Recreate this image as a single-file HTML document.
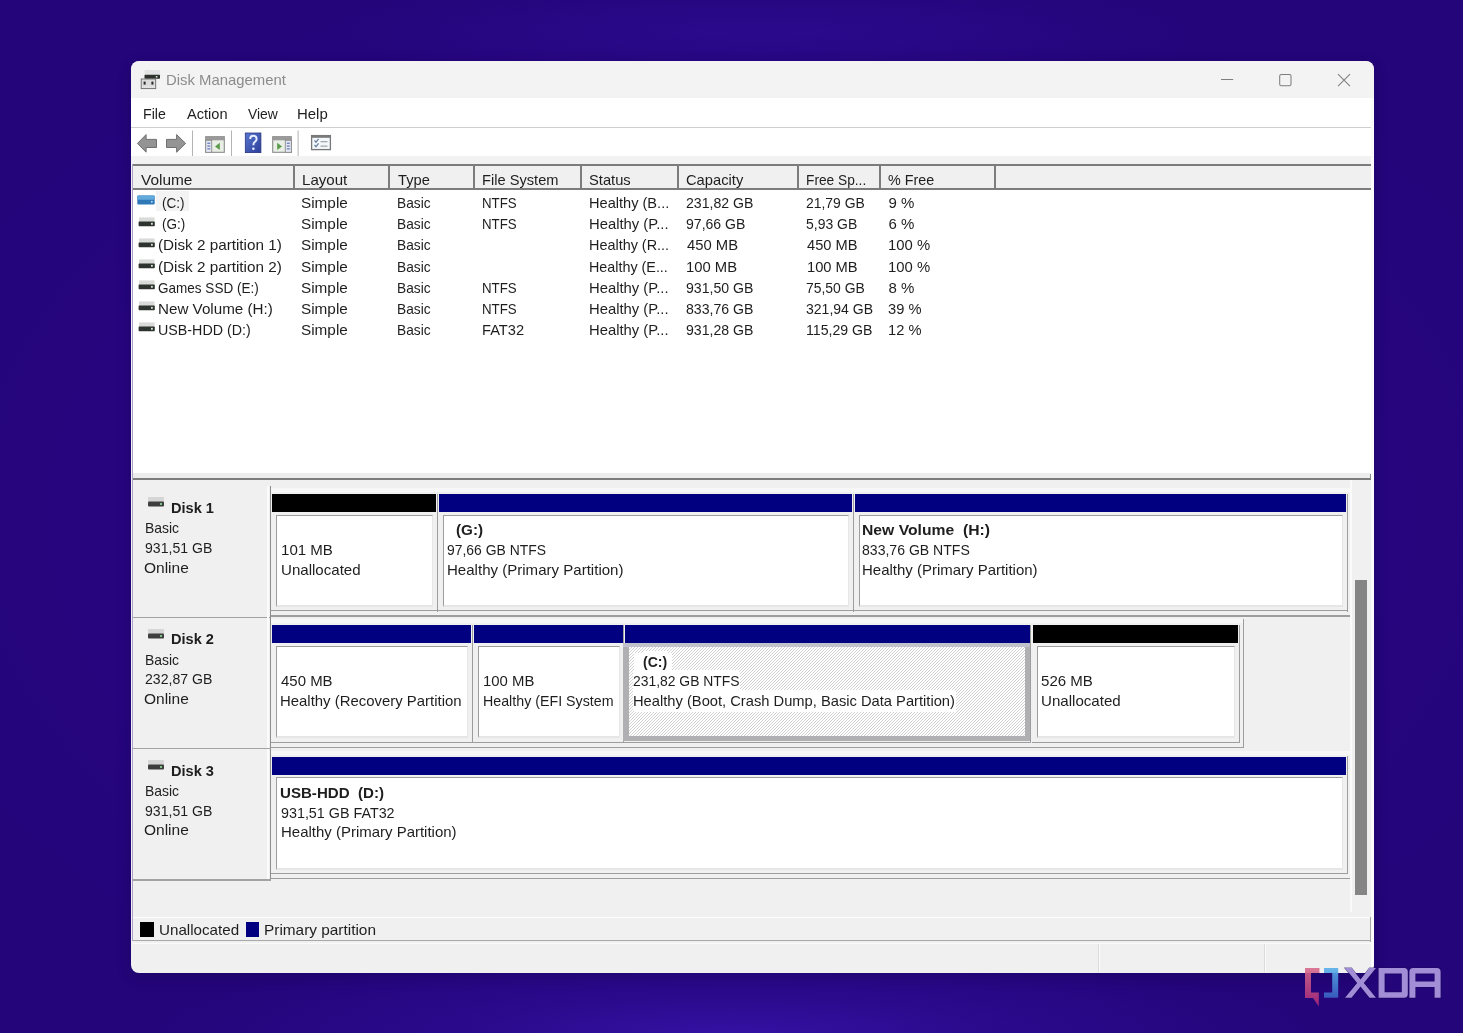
<!DOCTYPE html>
<html><head><meta charset="utf-8">
<style>
*{margin:0;padding:0;box-sizing:border-box}
html,body{width:1463px;height:1033px;overflow:hidden}
body{position:relative;font-family:"Liberation Sans",sans-serif;font-size:15px;color:#1e1e1e;
background:radial-gradient(ellipse 40% 8% at 50% 100%, rgba(56,20,172,.8) 0%, rgba(50,16,160,.45) 45%, rgba(38,5,127,0) 100%),radial-gradient(ellipse 30% 5% at 52% 3%, rgba(50,16,160,.45) 0%, rgba(38,5,127,0) 100%),radial-gradient(ellipse 60% 55% at 50% 50%, #2a0788 0%, #27057f 70%, #24057a 100%);}
.a{position:absolute}
.t{position:absolute;white-space:nowrap;filter:grayscale(1)}
.b{font-weight:bold}
</style></head><body>
<div class="a" style="left:131px;top:61px;width:1243px;height:911.6px;border-radius:8px;background:#f0f0f0;box-shadow:0 4px 14px rgba(10,0,50,.22)"></div>
<div class="a" style="left:0;top:0;width:1463px;height:1033px;clip-path:inset(61px 89px 60.4px 131px round 8px)">
<div class="a" style="left:131px;top:61px;width:1243px;height:37px;border-radius:8px 8px 0 0;background:#f3f3f3"></div>
<div class="t" style="left:165.61px;top:68.80px;line-height:21px;transform:scaleX(0.9917);transform-origin:0 0;color:#8c8c8c">Disk Management</div>
<div class="a" style="left:131px;top:98px;width:1243px;height:29px;background:#fff"></div>
<div class="a" style="left:131px;top:127px;width:1243px;height:1px;background:#cfcfcf"></div>
<div class="t" style="left:143.26px;top:102.80px;line-height:21px;transform:scaleX(0.9435);transform-origin:0 0;">File</div>
<div class="t" style="left:186.60px;top:102.80px;line-height:21px;transform:scaleX(0.9732);transform-origin:0 0;">Action</div>
<div class="t" style="left:248.00px;top:102.80px;line-height:21px;transform:scaleX(0.9250);transform-origin:0 0;">View</div>
<div class="t" style="left:296.90px;top:102.80px;line-height:21px;transform:scaleX(0.9966);transform-origin:0 0;">Help</div>
<div class="a" style="left:131px;top:128px;width:1243px;height:28px;background:#fff"></div>
<div class="a" style="left:131px;top:156px;width:1243px;height:8px;background:#f2f2f2"></div>
<svg class="a" style="left:140px;top:69px" width="22" height="21" viewBox="0 0 22 21">
<rect x="4.5" y="1" width="15.5" height="5" fill="#e2e4e4"/>
<rect x="4.5" y="5.8" width="15.5" height="4" rx="0.8" fill="#2d302d"/>
<rect x="15.8" y="7" width="1.6" height="1.6" fill="#cfe8cf"/>
<rect x="1.2" y="10" width="14.5" height="9.6" fill="#dcdcdc" stroke="#6a6a6a" stroke-width="0.9"/>
<rect x="3.6" y="12.6" width="2" height="3" fill="#2a2a2a"/>
<rect x="11.4" y="12.6" width="2" height="3" fill="#2a2a2a"/>
<line x1="2" y1="18" x2="15" y2="18" stroke="#fafafa" stroke-width="0.8" stroke-dasharray="1 1"/>
</svg>
<svg class="a" style="left:1215px;top:68px" width="145" height="24" viewBox="0 0 145 24">
<line x1="6" y1="11.4" x2="18.2" y2="11.4" stroke="#7e7e7e" stroke-width="1.05"/>
<rect x="64.7" y="6.5" width="11.3" height="11.3" rx="1.6" fill="none" stroke="#7e7e7e" stroke-width="1.05"/>
<path d="M123 6.2 L135 18.2 M135 6.2 L123 18.2" stroke="#7e7e7e" stroke-width="1.05"/>
</svg>
<svg class="a" style="left:0;top:0" width="400" height="160" viewBox="0 0 400 160">
<path d="M137.5,143.4 L146.1,134.6 L146.1,139.4 L156.5,139.4 L156.5,147.5 L146.1,147.5 L146.1,152.2 Z" fill="#949494" stroke="#707070" stroke-width="1"/>
<path d="M185.6,143.4 L176.6,134.6 L176.6,139.4 L166.5,139.4 L166.5,147.5 L176.6,147.5 L176.6,152.2 Z" fill="#949494" stroke="#707070" stroke-width="1"/>
<rect x="192" y="130.5" width="1" height="25.5" fill="#b4b4b4"/>
<rect x="231" y="130.5" width="1" height="25.5" fill="#b4b4b4"/>
<rect x="297.6" y="130.5" width="1" height="25.5" fill="#b4b4b4"/>
<g>
<rect x="205.7" y="136.7" width="18.6" height="15.6" fill="#e9efe6" stroke="#8a8a8a" stroke-width="1.1"/>
<rect x="205.7" y="136.7" width="18.6" height="3.6" fill="#9a9a9a"/>
<rect x="205.7" y="140.3" width="6" height="12" fill="#e6e9f2" stroke="#8a8a8a" stroke-width="0.9"/>
<rect x="207.3" y="142.6" width="3" height="1.3" fill="#6b7fbf"/><rect x="207.3" y="145.4" width="3" height="1.3" fill="#6b7fbf"/><rect x="207.3" y="148.2" width="3" height="1.3" fill="#6b7fbf"/>
<path d="M215,146.4 L219.8,142.8 L219.8,150 Z" fill="#5a9a4a"/>
</g>
<g>
<rect x="272.7" y="136.7" width="18.6" height="15.6" fill="#e9efe6" stroke="#8a8a8a" stroke-width="1.1"/>
<rect x="272.7" y="136.7" width="18.6" height="3.6" fill="#9a9a9a"/>
<rect x="285.3" y="140.3" width="6" height="12" fill="#e6e9f2" stroke="#8a8a8a" stroke-width="0.9"/>
<rect x="286.8" y="142.6" width="3" height="1.3" fill="#6b7fbf"/><rect x="286.8" y="145.4" width="3" height="1.3" fill="#6b7fbf"/><rect x="286.8" y="148.2" width="3" height="1.3" fill="#6b7fbf"/>
<path d="M282,146.4 L277.2,142.8 L277.2,150 Z" fill="#5a9a4a"/>
</g>
<defs><linearGradient id="hg" x1="0" y1="0" x2="1" y2="1"><stop offset="0" stop-color="#5a76cf"/><stop offset="1" stop-color="#2a3e9a"/></linearGradient></defs>
<rect x="245.3" y="133" width="15.6" height="19.6" fill="url(#hg)" stroke="#26367e" stroke-width="0.8"/>
<path d="M250.2,139 Q250.2,135.8 253.3,135.8 Q256.6,135.8 256.6,139 Q256.6,141 254.6,142.2 Q253.4,143 253.4,145.3" fill="none" stroke="#e4ecff" stroke-width="2"/>
<circle cx="253.4" cy="148.7" r="1.3" fill="#e4ecff"/>
<rect x="311.6" y="135.6" width="18.8" height="14" fill="#f2f8fc" stroke="#777" stroke-width="1.3"/>
<rect x="311.6" y="135.6" width="18.8" height="2.2" fill="#7a7a7a"/>
<path d="M314.5,140.5 L316,142.2 L318.6,138.9 M314.5,145 L316,146.7 L318.6,143.4" fill="none" stroke="#6a80a0" stroke-width="1.2"/>
<rect x="320.5" y="141" width="7" height="1.3" fill="#a8a8a8"/><rect x="320.5" y="145.5" width="7" height="1.3" fill="#a8a8a8"/>
</svg>
<div class="a" style="left:133px;top:164px;width:1238px;height:309px;background:#fff"></div>
<div class="a" style="left:133px;top:164px;width:1238px;height:26px;background:#f0f0f0"></div>
<div class="a" style="left:133px;top:164px;width:1238px;height:2px;background:#7c7c7c"></div>
<div class="a" style="left:133px;top:188px;width:1238px;height:2px;background:#7c7c7c"></div>
<div class="a" style="left:293px;top:164px;width:2px;height:26px;background:#7c7c7c"></div>
<div class="a" style="left:388px;top:164px;width:2px;height:26px;background:#7c7c7c"></div>
<div class="a" style="left:473px;top:164px;width:2px;height:26px;background:#7c7c7c"></div>
<div class="a" style="left:580px;top:164px;width:2px;height:26px;background:#7c7c7c"></div>
<div class="a" style="left:677px;top:164px;width:2px;height:26px;background:#7c7c7c"></div>
<div class="a" style="left:797px;top:164px;width:2px;height:26px;background:#7c7c7c"></div>
<div class="a" style="left:879px;top:164px;width:2px;height:26px;background:#7c7c7c"></div>
<div class="a" style="left:994px;top:164px;width:2px;height:26px;background:#7c7c7c"></div>
<div class="t" style="left:141.00px;top:169.30px;line-height:21px;transform:scaleX(1.0280);transform-origin:0 0;">Volume</div>
<div class="t" style="left:301.50px;top:169.30px;line-height:21px;transform:scaleX(1.0045);transform-origin:0 0;">Layout</div>
<div class="t" style="left:398.00px;top:169.30px;line-height:21px;transform:scaleX(0.9781);transform-origin:0 0;">Type</div>
<div class="t" style="left:482.22px;top:169.30px;line-height:21px;transform:scaleX(0.9763);transform-origin:0 0;">File System</div>
<div class="t" style="left:589.32px;top:169.30px;line-height:21px;transform:scaleX(0.9805);transform-origin:0 0;">Status</div>
<div class="t" style="left:685.52px;top:169.30px;line-height:21px;transform:scaleX(0.9807);transform-origin:0 0;">Capacity</div>
<div class="t" style="left:806.09px;top:169.30px;line-height:21px;transform:scaleX(0.9141);transform-origin:0 0;">Free Sp...</div>
<div class="t" style="left:888.44px;top:169.30px;line-height:21px;transform:scaleX(0.9553);transform-origin:0 0;">% Free</div>
<div class="a" style="left:156px;top:191px;width:32.5px;height:19.5px;background:#f3f3f3"></div>
<svg class="a" style="left:137.3px;top:195.2px" width="18" height="10" viewBox="0 0 18 10"><rect x="0.3" y="0.5" width="17.4" height="9" rx="1" fill="#2f78b8"/><rect x="0.3" y="0.5" width="17.4" height="4.2" rx="1" fill="#62a9dc"/><rect x="14" y="6" width="1.6" height="1.5" fill="#c8e4f4"/></svg>
<svg class="a" style="left:137.5px;top:216.6px" width="18" height="10" viewBox="0 0 18 10"><rect x="1" y="0.4" width="15.5" height="4.6" fill="#d9dbd9"/><rect x="0.6" y="4.6" width="16.2" height="4.6" rx="0.8" fill="#2e332f"/><rect x="13" y="5.9" width="1.8" height="1.8" fill="#d4ecd4"/></svg>
<svg class="a" style="left:137.5px;top:237.7px" width="18" height="10" viewBox="0 0 18 10"><rect x="1" y="0.4" width="15.5" height="4.6" fill="#d9dbd9"/><rect x="0.6" y="4.6" width="16.2" height="4.6" rx="0.8" fill="#2e332f"/><rect x="13" y="5.9" width="1.8" height="1.8" fill="#d4ecd4"/></svg>
<svg class="a" style="left:137.5px;top:258.8px" width="18" height="10" viewBox="0 0 18 10"><rect x="1" y="0.4" width="15.5" height="4.6" fill="#d9dbd9"/><rect x="0.6" y="4.6" width="16.2" height="4.6" rx="0.8" fill="#2e332f"/><rect x="13" y="5.9" width="1.8" height="1.8" fill="#d4ecd4"/></svg>
<svg class="a" style="left:137.5px;top:279.9px" width="18" height="10" viewBox="0 0 18 10"><rect x="1" y="0.4" width="15.5" height="4.6" fill="#d9dbd9"/><rect x="0.6" y="4.6" width="16.2" height="4.6" rx="0.8" fill="#2e332f"/><rect x="13" y="5.9" width="1.8" height="1.8" fill="#d4ecd4"/></svg>
<svg class="a" style="left:137.5px;top:301.0px" width="18" height="10" viewBox="0 0 18 10"><rect x="1" y="0.4" width="15.5" height="4.6" fill="#d9dbd9"/><rect x="0.6" y="4.6" width="16.2" height="4.6" rx="0.8" fill="#2e332f"/><rect x="13" y="5.9" width="1.8" height="1.8" fill="#d4ecd4"/></svg>
<svg class="a" style="left:137.5px;top:322.1px" width="18" height="10" viewBox="0 0 18 10"><rect x="1" y="0.4" width="15.5" height="4.6" fill="#d9dbd9"/><rect x="0.6" y="4.6" width="16.2" height="4.6" rx="0.8" fill="#2e332f"/><rect x="13" y="5.9" width="1.8" height="1.8" fill="#d4ecd4"/></svg>
<div class="t" style="left:162.30px;top:192.20px;line-height:21px;transform:scaleX(0.9043);transform-origin:0 0;">(C:)</div>
<div class="t" style="left:301.48px;top:192.20px;line-height:21px;transform:scaleX(1.0205);transform-origin:0 0;">Simple</div>
<div class="t" style="left:397.09px;top:192.20px;line-height:21px;transform:scaleX(0.9143);transform-origin:0 0;">Basic</div>
<div class="t" style="left:482.31px;top:192.20px;line-height:21px;transform:scaleX(0.8868);transform-origin:0 0;">NTFS</div>
<div class="t" style="left:589.33px;top:192.20px;line-height:21px;transform:scaleX(0.9725);transform-origin:0 0;">Healthy (B...</div>
<div class="t" style="left:685.56px;top:192.20px;line-height:21px;transform:scaleX(0.9400);transform-origin:0 0;">231,82 GB</div>
<div class="t" style="left:806.07px;top:192.20px;line-height:21px;transform:scaleX(0.9274);transform-origin:0 0;">21,79 GB</div>
<div class="t" style="left:888.40px;top:192.20px;line-height:21px;transform:scaleX(1.0000);transform-origin:0 0;">9 %</div>
<div class="t" style="left:162.30px;top:213.30px;line-height:21px;transform:scaleX(0.9000);transform-origin:0 0;">(G:)</div>
<div class="t" style="left:301.48px;top:213.30px;line-height:21px;transform:scaleX(1.0205);transform-origin:0 0;">Simple</div>
<div class="t" style="left:397.09px;top:213.30px;line-height:21px;transform:scaleX(0.9143);transform-origin:0 0;">Basic</div>
<div class="t" style="left:482.31px;top:213.30px;line-height:21px;transform:scaleX(0.8868);transform-origin:0 0;">NTFS</div>
<div class="t" style="left:589.31px;top:213.30px;line-height:21px;transform:scaleX(0.9872);transform-origin:0 0;">Healthy (P...</div>
<div class="t" style="left:685.56px;top:213.30px;line-height:21px;transform:scaleX(0.9371);transform-origin:0 0;">97,66 GB</div>
<div class="t" style="left:806.07px;top:213.30px;line-height:21px;transform:scaleX(0.9302);transform-origin:0 0;">5,93 GB</div>
<div class="t" style="left:888.40px;top:213.30px;line-height:21px;transform:scaleX(1.0000);transform-origin:0 0;">6 %</div>
<div class="t" style="left:157.98px;top:234.40px;line-height:21px;transform:scaleX(1.0167);transform-origin:0 0;">(Disk 2 partition 1)</div>
<div class="t" style="left:301.48px;top:234.40px;line-height:21px;transform:scaleX(1.0205);transform-origin:0 0;">Simple</div>
<div class="t" style="left:397.09px;top:234.40px;line-height:21px;transform:scaleX(0.9143);transform-origin:0 0;">Basic</div>
<div class="t" style="left:589.34px;top:234.40px;line-height:21px;transform:scaleX(0.9605);transform-origin:0 0;">Healthy (R...</div>
<div class="t" style="left:686.50px;top:234.40px;line-height:21px;transform:scaleX(0.9882);transform-origin:0 0;">450 MB</div>
<div class="t" style="left:807.00px;top:234.40px;line-height:21px;transform:scaleX(0.9765);transform-origin:0 0;">450 MB</div>
<div class="t" style="left:888.41px;top:234.40px;line-height:21px;transform:scaleX(0.9902);transform-origin:0 0;">100 %</div>
<div class="t" style="left:157.98px;top:255.50px;line-height:21px;transform:scaleX(1.0167);transform-origin:0 0;">(Disk 2 partition 2)</div>
<div class="t" style="left:301.48px;top:255.50px;line-height:21px;transform:scaleX(1.0205);transform-origin:0 0;">Simple</div>
<div class="t" style="left:397.09px;top:255.50px;line-height:21px;transform:scaleX(0.9143);transform-origin:0 0;">Basic</div>
<div class="t" style="left:589.34px;top:255.50px;line-height:21px;transform:scaleX(0.9550);transform-origin:0 0;">Healthy (E...</div>
<div class="t" style="left:686.41px;top:255.50px;line-height:21px;transform:scaleX(0.9880);transform-origin:0 0;">100 MB</div>
<div class="t" style="left:806.52px;top:255.50px;line-height:21px;transform:scaleX(0.9800);transform-origin:0 0;">100 MB</div>
<div class="t" style="left:888.41px;top:255.50px;line-height:21px;transform:scaleX(0.9902);transform-origin:0 0;">100 %</div>
<div class="t" style="left:158.10px;top:276.60px;line-height:21px;transform:scaleX(0.9018);transform-origin:0 0;">Games SSD (E:)</div>
<div class="t" style="left:301.48px;top:276.60px;line-height:21px;transform:scaleX(1.0205);transform-origin:0 0;">Simple</div>
<div class="t" style="left:397.09px;top:276.60px;line-height:21px;transform:scaleX(0.9143);transform-origin:0 0;">Basic</div>
<div class="t" style="left:482.31px;top:276.60px;line-height:21px;transform:scaleX(0.8868);transform-origin:0 0;">NTFS</div>
<div class="t" style="left:589.31px;top:276.60px;line-height:21px;transform:scaleX(0.9872);transform-origin:0 0;">Healthy (P...</div>
<div class="t" style="left:685.56px;top:276.60px;line-height:21px;transform:scaleX(0.9400);transform-origin:0 0;">931,50 GB</div>
<div class="t" style="left:806.07px;top:276.60px;line-height:21px;transform:scaleX(0.9274);transform-origin:0 0;">75,50 GB</div>
<div class="t" style="left:888.40px;top:276.60px;line-height:21px;transform:scaleX(1.0000);transform-origin:0 0;">8 %</div>
<div class="t" style="left:157.99px;top:297.70px;line-height:21px;transform:scaleX(1.0126);transform-origin:0 0;">New Volume (H:)</div>
<div class="t" style="left:301.48px;top:297.70px;line-height:21px;transform:scaleX(1.0205);transform-origin:0 0;">Simple</div>
<div class="t" style="left:397.09px;top:297.70px;line-height:21px;transform:scaleX(0.9143);transform-origin:0 0;">Basic</div>
<div class="t" style="left:482.31px;top:297.70px;line-height:21px;transform:scaleX(0.8868);transform-origin:0 0;">NTFS</div>
<div class="t" style="left:589.31px;top:297.70px;line-height:21px;transform:scaleX(0.9872);transform-origin:0 0;">Healthy (P...</div>
<div class="t" style="left:685.56px;top:297.70px;line-height:21px;transform:scaleX(0.9400);transform-origin:0 0;">833,76 GB</div>
<div class="t" style="left:806.06px;top:297.70px;line-height:21px;transform:scaleX(0.9357);transform-origin:0 0;">321,94 GB</div>
<div class="t" style="left:888.42px;top:297.70px;line-height:21px;transform:scaleX(0.9788);transform-origin:0 0;">39 %</div>
<div class="t" style="left:158.05px;top:318.80px;line-height:21px;transform:scaleX(0.9510);transform-origin:0 0;">USB-HDD (D:)</div>
<div class="t" style="left:301.48px;top:318.80px;line-height:21px;transform:scaleX(1.0205);transform-origin:0 0;">Simple</div>
<div class="t" style="left:397.09px;top:318.80px;line-height:21px;transform:scaleX(0.9143);transform-origin:0 0;">Basic</div>
<div class="t" style="left:482.22px;top:318.80px;line-height:21px;transform:scaleX(0.9756);transform-origin:0 0;">FAT32</div>
<div class="t" style="left:589.31px;top:318.80px;line-height:21px;transform:scaleX(0.9872);transform-origin:0 0;">Healthy (P...</div>
<div class="t" style="left:685.56px;top:318.80px;line-height:21px;transform:scaleX(0.9400);transform-origin:0 0;">931,28 GB</div>
<div class="t" style="left:806.46px;top:318.80px;line-height:21px;transform:scaleX(0.9420);transform-origin:0 0;">115,29 GB</div>
<div class="t" style="left:888.42px;top:318.80px;line-height:21px;transform:scaleX(0.9788);transform-origin:0 0;">12 %</div>
<div class="a" style="left:133px;top:473px;width:1238px;height:5px;background:#ececec"></div>
<div class="a" style="left:133px;top:478px;width:1238px;height:2px;background:#7c7c7c"></div>
<div class="a" style="left:1369.6px;top:473.8px;width:1.4px;height:5.5px;background:#8a8a8a"></div>
<div class="a" style="left:133px;top:480px;width:1238px;height:7px;background:#f4f4f4"></div>
<div class="a" style="left:133px;top:480px;width:1238px;height:437px;background:#f0f0f0"></div>
<div class="a" style="left:266.5px;top:486.0px;width:2.5px;height:131.3px;background:#fbfbfb"></div>
<div class="a" style="left:269.5px;top:486.0px;width:1.5px;height:131.3px;background:#8e8e8e"></div>
<div class="a" style="left:133px;top:616.6px;width:137.5px;height:1.5px;background:#a2a2a2"></div>
<div class="a" style="left:266.5px;top:617.3px;width:2.5px;height:131.3px;background:#fbfbfb"></div>
<div class="a" style="left:269.5px;top:617.3px;width:1.5px;height:131.3px;background:#8e8e8e"></div>
<div class="a" style="left:133px;top:747.9px;width:137.5px;height:1.5px;background:#a2a2a2"></div>
<div class="a" style="left:266.5px;top:748.6px;width:2.5px;height:131.3px;background:#fbfbfb"></div>
<div class="a" style="left:269.5px;top:748.6px;width:1.5px;height:131.3px;background:#8e8e8e"></div>
<div class="a" style="left:133px;top:879.2px;width:137.5px;height:1.5px;background:#a2a2a2"></div>
<div class="a" style="left:1351.0px;top:488.0px;width:1.2px;height:128px;background:#9d9d9d"></div>
<div class="a" style="left:271px;top:615.4px;width:1081.0px;height:1.3px;background:#9d9d9d"></div>
<div class="a" style="left:271px;top:488.0px;width:1080.0px;height:4px;background:#f7f7f7"></div>
<div class="a" style="left:272px;top:494.0px;width:164.0px;height:18px;background:#000"></div>
<div class="a" style="left:436.5px;top:493.5px;width:1.2px;height:118px;background:#9d9d9d"></div>
<div class="a" style="left:271px;top:610.3px;width:166.5px;height:1.2px;background:#9d9d9d"></div>
<div class="a" style="left:276px;top:514.8px;width:157.0px;height:92.2px;background:#fff;border-left:1.5px solid #9d9d9d;border-top:1.5px solid #9d9d9d;border-right:1px solid #e6e6e6;border-bottom:2px solid #e6e6e6"></div>
<div class="t" style="left:280.90px;top:538.90px;line-height:21px;transform:scaleX(1.0040);transform-origin:0 0;">101 MB</div>
<div class="t" style="left:280.89px;top:558.60px;line-height:21px;transform:scaleX(1.0052);transform-origin:0 0;">Unallocated</div>
<div class="a" style="left:438.5px;top:494.0px;width:413.5px;height:18px;background:#000080"></div>
<div class="a" style="left:852.5px;top:493.5px;width:1.2px;height:118px;background:#9d9d9d"></div>
<div class="a" style="left:437.5px;top:610.3px;width:416.0px;height:1.2px;background:#9d9d9d"></div>
<div class="a" style="left:442.5px;top:514.8px;width:406.5px;height:92.2px;background:#fff;border-left:1.5px solid #9d9d9d;border-top:1.5px solid #9d9d9d;border-right:1px solid #e6e6e6;border-bottom:2px solid #e6e6e6"></div>
<div class="t" style="left:455.98px;top:519.20px;line-height:21px;transform:scaleX(1.0160);transform-origin:0 0;font-weight:bold">(G:)</div>
<div class="t" style="left:446.67px;top:538.90px;line-height:21px;transform:scaleX(0.9276);transform-origin:0 0;">97,66 GB NTFS</div>
<div class="t" style="left:446.60px;top:558.60px;line-height:21px;transform:scaleX(1.0034);transform-origin:0 0;">Healthy (Primary Partition)</div>
<div class="a" style="left:854.5px;top:494.0px;width:491.5px;height:18px;background:#000080"></div>
<div class="a" style="left:1346.5px;top:493.5px;width:1.2px;height:118px;background:#9d9d9d"></div>
<div class="a" style="left:853.5px;top:610.3px;width:494.0px;height:1.2px;background:#9d9d9d"></div>
<div class="a" style="left:858.5px;top:514.8px;width:484.5px;height:92.2px;background:#fff;border-left:1.5px solid #9d9d9d;border-top:1.5px solid #9d9d9d;border-right:1px solid #e6e6e6;border-bottom:2px solid #e6e6e6"></div>
<div class="t" style="left:861.85px;top:519.20px;line-height:21px;transform:scaleX(1.0471);transform-origin:0 0;font-weight:bold">New Volume&nbsp;&nbsp;(H:)</div>
<div class="t" style="left:861.96px;top:538.90px;line-height:21px;transform:scaleX(0.9372);transform-origin:0 0;">833,76 GB NTFS</div>
<div class="t" style="left:861.90px;top:558.60px;line-height:21px;transform:scaleX(0.9983);transform-origin:0 0;">Healthy (Primary Partition)</div>
<div class="a" style="left:148px;top:497.4px;width:16px;height:10px"><svg style="display:block" width="16" height="10" viewBox="0 0 16 10"><rect x="0" y="0" width="16" height="5" fill="#d6d6d6"/><rect x="0" y="4.5" width="16" height="5" rx="1" fill="#3e3e3e"/><rect x="12" y="6" width="2" height="2" fill="#7fc08a"/></svg></div>
<div class="t" style="left:170.73px;top:497.00px;line-height:21px;transform:scaleX(0.9721);transform-origin:0 0;font-weight:bold">Disk 1</div>
<div class="t" style="left:144.57px;top:517.40px;line-height:21px;transform:scaleX(0.9286);transform-origin:0 0;">Basic</div>
<div class="t" style="left:144.56px;top:537.10px;line-height:21px;transform:scaleX(0.9386);transform-origin:0 0;">931,51 GB</div>
<div class="t" style="left:144.47px;top:556.80px;line-height:21px;transform:scaleX(1.0333);transform-origin:0 0;">Online</div>
<div class="a" style="left:1243.0px;top:619.3px;width:1.2px;height:128px;background:#9d9d9d"></div>
<div class="a" style="left:271px;top:746.6999999999999px;width:973.0px;height:1.3px;background:#9d9d9d"></div>
<div class="a" style="left:271px;top:619.3px;width:972.0px;height:4px;background:#f7f7f7"></div>
<div class="a" style="left:272px;top:625.3px;width:199.0px;height:18px;background:#000080"></div>
<div class="a" style="left:471.5px;top:624.8px;width:1.2px;height:118px;background:#9d9d9d"></div>
<div class="a" style="left:271px;top:741.5999999999999px;width:201.5px;height:1.2px;background:#9d9d9d"></div>
<div class="a" style="left:276px;top:646.0999999999999px;width:192.0px;height:92.2px;background:#fff;border-left:1.5px solid #9d9d9d;border-top:1.5px solid #9d9d9d;border-right:1px solid #e6e6e6;border-bottom:2px solid #e6e6e6"></div>
<div class="t" style="left:281.20px;top:670.20px;line-height:21px;transform:scaleX(0.9980);transform-origin:0 0;">450 MB</div>
<div class="t" style="left:280.21px;top:689.90px;line-height:21px;transform:scaleX(0.9945);transform-origin:0 0;">Healthy (Recovery Partition</div>
<div class="a" style="left:473.5px;top:625.3px;width:149.0px;height:18px;background:#000080"></div>
<div class="a" style="left:623px;top:624.8px;width:1.2px;height:118px;background:#9d9d9d"></div>
<div class="a" style="left:472.5px;top:741.5999999999999px;width:151.5px;height:1.2px;background:#9d9d9d"></div>
<div class="a" style="left:477.5px;top:646.0999999999999px;width:142.0px;height:92.2px;background:#fff;border-left:1.5px solid #9d9d9d;border-top:1.5px solid #9d9d9d;border-right:1px solid #e6e6e6;border-bottom:2px solid #e6e6e6"></div>
<div class="t" style="left:482.71px;top:670.20px;line-height:21px;transform:scaleX(0.9940);transform-origin:0 0;">100 MB</div>
<div class="t" style="left:482.75px;top:689.90px;line-height:21px;transform:scaleX(0.9493);transform-origin:0 0;">Healthy (EFI System</div>
<div class="a" style="left:625px;top:625.3px;width:404.5px;height:18px;background:#000080"></div>
<div class="a" style="left:1030px;top:624.8px;width:1.2px;height:118px;background:#9d9d9d"></div>
<div class="a" style="left:624px;top:741.5999999999999px;width:407px;height:1.2px;background:#9d9d9d"></div>
<div class="a" style="left:623.2px;top:642.9px;width:406.8px;height:98.5px;background:#b0b0b3"></div>
<div class="a" style="left:623.2px;top:642.9px;width:406.8px;height:4.6px;background:#c2c2cc"></div>
<svg class="a" style="left:629px;top:647px" width="396" height="89" shape-rendering="crispEdges"><defs><pattern id="hp" width="3" height="3" patternUnits="userSpaceOnUse"><rect width="3" height="3" fill="#fff"/><rect x="0" y="2" width="1" height="1" fill="#d2d2d2"/><rect x="1" y="1" width="1" height="1" fill="#d2d2d2"/><rect x="2" y="0" width="1" height="1" fill="#d2d2d2"/></pattern></defs><rect width="396" height="89" fill="url(#hp)"/></svg>
<div class="a" style="left:633.7px;top:653.3px;width:38px;height:19px;background:#fff"></div>
<div class="a" style="left:633.7px;top:672.3px;width:106px;height:19.7px;background:#fff"></div>
<div class="a" style="left:633.7px;top:692.0px;width:322px;height:19.7px;background:#fff"></div>
<div class="t" style="left:642.56px;top:650.50px;line-height:21px;transform:scaleX(0.9375);transform-origin:0 0;font-weight:bold;background:#fff">(C:)</div>
<div class="t" style="left:633.47px;top:670.20px;line-height:21px;transform:scaleX(0.9257);transform-origin:0 0;;background:#fff">231,82 GB NTFS</div>
<div class="t" style="left:633.42px;top:689.90px;line-height:21px;transform:scaleX(0.9801);transform-origin:0 0;;background:#fff">Healthy (Boot, Crash Dump, Basic Data Partition)</div>
<div class="a" style="left:1033px;top:625.3px;width:205.0px;height:18px;background:#000"></div>
<div class="a" style="left:1238.5px;top:624.8px;width:1.2px;height:118px;background:#9d9d9d"></div>
<div class="a" style="left:1032px;top:741.5999999999999px;width:207.5px;height:1.2px;background:#9d9d9d"></div>
<div class="a" style="left:1037px;top:646.0999999999999px;width:198.0px;height:92.2px;background:#fff;border-left:1.5px solid #9d9d9d;border-top:1.5px solid #9d9d9d;border-right:1px solid #e6e6e6;border-bottom:2px solid #e6e6e6"></div>
<div class="t" style="left:1040.90px;top:670.20px;line-height:21px;transform:scaleX(1.0040);transform-origin:0 0;">526 MB</div>
<div class="t" style="left:1040.89px;top:689.90px;line-height:21px;transform:scaleX(1.0065);transform-origin:0 0;">Unallocated</div>
<div class="a" style="left:148px;top:628.7px;width:16px;height:10px"><svg style="display:block" width="16" height="10" viewBox="0 0 16 10"><rect x="0" y="0" width="16" height="5" fill="#d6d6d6"/><rect x="0" y="4.5" width="16" height="5" rx="1" fill="#3e3e3e"/><rect x="12" y="6" width="2" height="2" fill="#7fc08a"/></svg></div>
<div class="t" style="left:170.73px;top:628.30px;line-height:21px;transform:scaleX(0.9721);transform-origin:0 0;font-weight:bold">Disk 2</div>
<div class="t" style="left:144.57px;top:648.70px;line-height:21px;transform:scaleX(0.9286);transform-origin:0 0;">Basic</div>
<div class="t" style="left:144.56px;top:668.40px;line-height:21px;transform:scaleX(0.9386);transform-origin:0 0;">232,87 GB</div>
<div class="t" style="left:144.47px;top:688.10px;line-height:21px;transform:scaleX(1.0333);transform-origin:0 0;">Online</div>
<div class="a" style="left:1351.0px;top:750.6px;width:1.2px;height:128px;background:#9d9d9d"></div>
<div class="a" style="left:271px;top:878.0px;width:1081.0px;height:1.3px;background:#9d9d9d"></div>
<div class="a" style="left:271px;top:750.6px;width:1080.0px;height:4px;background:#f7f7f7"></div>
<div class="a" style="left:272px;top:756.6px;width:1074.0px;height:18px;background:#000080"></div>
<div class="a" style="left:1346.5px;top:756.1px;width:1.2px;height:118px;background:#9d9d9d"></div>
<div class="a" style="left:271px;top:872.9px;width:1076.5px;height:1.2px;background:#9d9d9d"></div>
<div class="a" style="left:276px;top:777.4px;width:1067.0px;height:92.2px;background:#fff;border-left:1.5px solid #9d9d9d;border-top:1.5px solid #9d9d9d;border-right:1px solid #e6e6e6;border-bottom:2px solid #e6e6e6"></div>
<div class="t" style="left:280.49px;top:781.80px;line-height:21px;transform:scaleX(1.0059);transform-origin:0 0;font-weight:bold">USB-HDD&nbsp;&nbsp;(D:)</div>
<div class="t" style="left:280.55px;top:801.50px;line-height:21px;transform:scaleX(0.9547);transform-origin:0 0;">931,51 GB FAT32</div>
<div class="t" style="left:280.50px;top:821.20px;line-height:21px;transform:scaleX(0.9983);transform-origin:0 0;">Healthy (Primary Partition)</div>
<div class="a" style="left:148px;top:760.0px;width:16px;height:10px"><svg style="display:block" width="16" height="10" viewBox="0 0 16 10"><rect x="0" y="0" width="16" height="5" fill="#d6d6d6"/><rect x="0" y="4.5" width="16" height="5" rx="1" fill="#3e3e3e"/><rect x="12" y="6" width="2" height="2" fill="#7fc08a"/></svg></div>
<div class="t" style="left:170.73px;top:759.60px;line-height:21px;transform:scaleX(0.9721);transform-origin:0 0;font-weight:bold">Disk 3</div>
<div class="t" style="left:144.57px;top:780.00px;line-height:21px;transform:scaleX(0.9286);transform-origin:0 0;">Basic</div>
<div class="t" style="left:144.56px;top:799.70px;line-height:21px;transform:scaleX(0.9386);transform-origin:0 0;">931,51 GB</div>
<div class="t" style="left:144.47px;top:819.40px;line-height:21px;transform:scaleX(1.0333);transform-origin:0 0;">Online</div>
<div class="a" style="left:131.6px;top:164px;width:1.4px;height:777px;background:#aea2cc"></div>
<div class="a" style="left:1350px;top:480px;width:2px;height:432px;background:#fafafa"></div>
<div class="a" style="left:1355.2px;top:580.3px;width:11.8px;height:314.7px;background:#858585"></div>
<div class="a" style="left:1371px;top:98px;width:3px;height:874px;background:#fbfbfb"></div>
<div class="a" style="left:133px;top:917px;width:1238px;height:24px;background:#f0f0f0"></div>
<div class="a" style="left:133px;top:916.6px;width:1238px;height:1.2px;background:#fdfdfd"></div>
<div class="a" style="left:1369.8px;top:917px;width:1.4px;height:24.5px;background:#a8a8a8"></div>
<div class="a" style="left:133px;top:940px;width:1238px;height:1.4px;background:#a8a8a8"></div>
<div class="a" style="left:133px;top:942.5px;width:1238px;height:1.2px;background:#fbfbfb"></div>
<div class="a" style="left:1098px;top:944px;width:1px;height:29px;background:#dcdcdc"></div>
<div class="a" style="left:1099px;top:944px;width:1px;height:29px;background:#fafafa"></div>
<div class="a" style="left:1264px;top:944px;width:1px;height:29px;background:#dcdcdc"></div>
<div class="a" style="left:1265px;top:944px;width:1px;height:29px;background:#fafafa"></div>
<div class="a" style="left:140.4px;top:921.5px;width:13.3px;height:15.5px;background:#000"></div>
<div class="a" style="left:245.6px;top:921.5px;width:13.1px;height:15.5px;background:#000080"></div>
<div class="t" style="left:158.89px;top:919.40px;line-height:21px;transform:scaleX(1.0117);transform-origin:0 0;">Unallocated</div>
<div class="t" style="left:263.97px;top:919.40px;line-height:21px;transform:scaleX(1.0252);transform-origin:0 0;">Primary partition</div>
</div>
<svg class="a" style="left:1300px;top:962px" width="145" height="50" viewBox="1300 962 145 50">
<defs>
<linearGradient id="xp" x1="0" y1="0" x2="0" y2="1"><stop offset="0" stop-color="#d86a8c"/><stop offset="1" stop-color="#a82878"/></linearGradient>
<linearGradient id="xb" x1="0" y1="0" x2="0" y2="1"><stop offset="0" stop-color="#58b0ea"/><stop offset="1" stop-color="#3a62c4"/></linearGradient>
</defs>
<path d="M1305,968 L1319.5,968 L1319.5,973 L1311,973 L1311,992.6 L1318.8,992.6 L1318.8,1006.5 L1313,998 L1305,998 Z" fill="url(#xp)" opacity="0.9"/>
<path d="M1324,968 L1338.2,968 L1338.2,997.8 L1324,997.8 L1324,992.6 L1332.2,992.6 L1332.2,973 L1324,973 Z" fill="url(#xb)" opacity="0.9"/>
<g stroke="#1a0858" stroke-width="1.2" stroke-opacity="0.6" paint-order="stroke"><path d="M1345,968 L1351.5,968 L1360.5,979.6 L1369.5,968 L1376,968 L1363.8,983 L1376,997.8 L1369.5,997.8 L1360.5,986.4 L1351.5,997.8 L1345,997.8 L1357.2,983 Z" fill="#a28ed6"/>
<path d="M1378.6,968 L1404,968 Q1407.8,968 1407.8,971.8 L1407.8,994 Q1407.8,997.8 1404,997.8 L1378.6,997.8 Z M1384.6,973.6 L1384.6,992.2 L1401.8,992.2 L1401.8,973.6 Z" fill="#a28ed6" fill-rule="evenodd"/>
<path d="M1409.4,997.8 L1409.4,971.8 Q1409.4,968 1413.2,968 L1436.8,968 Q1440.6,968 1440.6,971.8 L1440.6,997.8 L1434.6,997.8 L1434.6,987 L1415.4,987 L1415.4,997.8 Z M1415.4,973.6 L1415.4,981.6 L1434.6,981.6 L1434.6,973.6 Z" fill="#a28ed6" fill-rule="evenodd"/></g>
</svg>
</body></html>
